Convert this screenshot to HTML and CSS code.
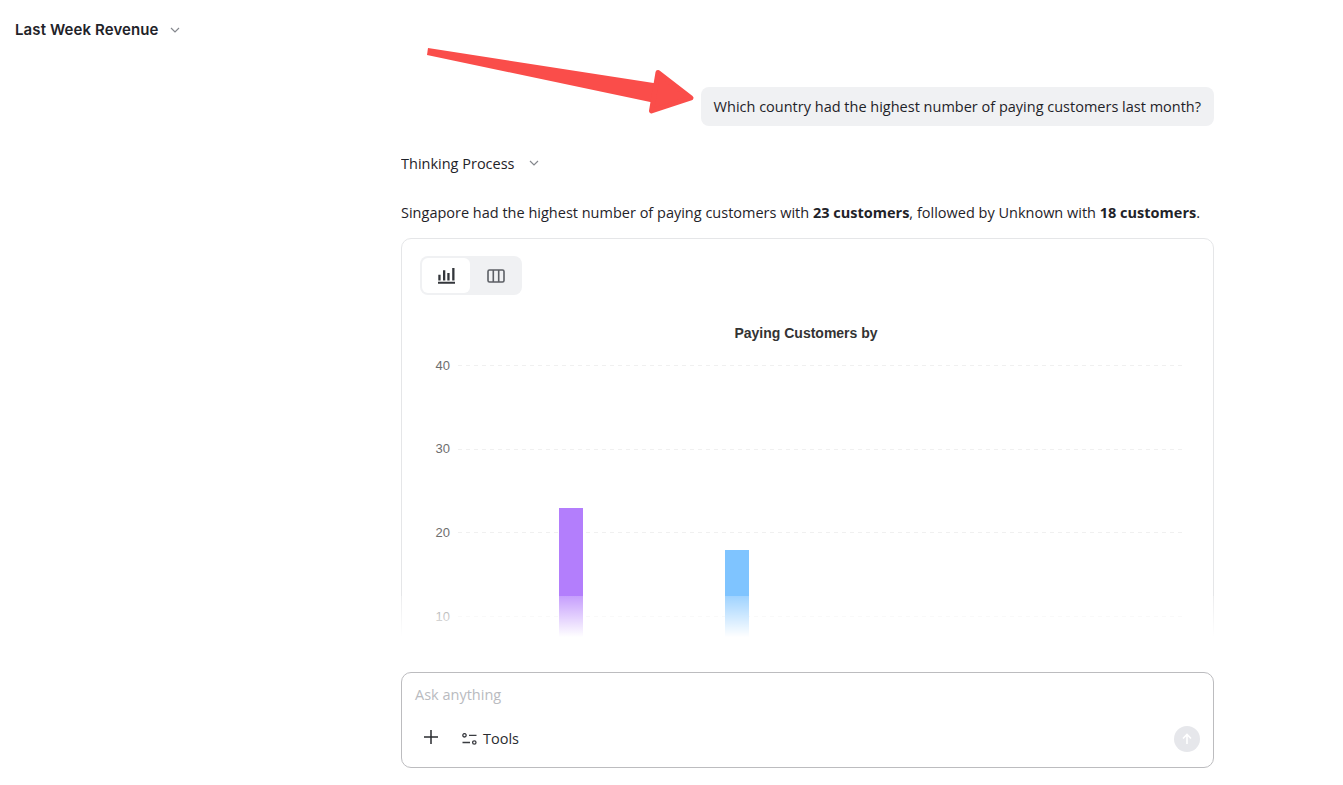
FILE: index.html
```html
<!DOCTYPE html>
<html lang="en">
  <head>
    <meta charset="UTF-8" />
    <title>Last Week Revenue</title>
    <link rel="stylesheet" href="styles.css">
  </head>
  <body>
    <div class="page">
      <aside class="side">
        <div class="side-title">
          <span>Last Week Revenue</span>
          <svg class="chev" viewBox="0 0 10 6"><path d="M1 1l4 4 4-4" /></svg>
        </div>
      </aside>

      <main class="main">
        <div class="thread">
          <div class="column">
            <div class="bubble">Which country had the highest number of paying customers last month?</div>
            <div class="thinking">
              <span>Thinking Process</span>
              <svg class="chev" viewBox="0 0 10 6"><path d="M1 1l4 4 4-4" /></svg>
            </div>
            <p class="answer">
              Singapore had the highest number of paying customers with <strong>23 customers</strong>,
              followed by Unknown with <strong>18 customers</strong>.
            </p>
            <div class="card">
              <div class="toggle">
                <button class="toggle-btn active">
                  <svg viewBox="0 0 17 16" width="17" height="16">
                    <path class="ico-fill" d="M0 13.800h17V15.700H0zM.3 6.700h2.300v5.700H.3zM5 2.300h2.300v10.100H5zM9.300 5h2.300v7.400H9.300zM14.200 0h2.300v12.400h-2.300z" />
                  </svg>
                </button>
                <button class="toggle-btn">
                  <svg viewBox="0 0 18 14" width="18" height="14">
                    <rect class="ico-line" x="1" y="1" width="16" height="12" rx="1.500" />
                    <path class="ico-line" d="M6.300 1v12M11.700 1v12" />
                  </svg>
                </button>
              </div>
              <svg class="chart" width="811" height="400" viewBox="402 310 811 400">
                <text class="chart-title" x="806" y="338" text-anchor="middle">Paying Customers by</text>
                <g class="axis-labels" text-anchor="end">
                  <text x="450" y="369.500">40</text>
                  <text x="450" y="453">30</text>
                  <text x="450" y="537">20</text>
                  <text x="450" y="620.500">10</text>
                </g>
                <g class="grid">
                  <path d="M458 365.500H1183M458 449.500H1183M458 532.500H1183M458 616.500H1183" />
                </g>
                <rect class="bar-a" x="559" y="508" width="24" height="192" />
                <rect class="bar-b" x="725" y="550" width="24" height="150" />
              </svg>
            </div>
          </div>
          <div class="fade"></div>
        </div>

        <div class="composer">
          <div class="placeholder">Ask anything</div>
          <div class="composer-row">
            <svg class="plus" viewBox="0 0 14 14" width="14" height="14"><path d="M7 0v14M0 7h14" /></svg>
            <div class="tools">
              <svg viewBox="0 0 15 12" width="15" height="12">
                <circle class="ico-line" cx="2.500" cy="2.300" r="1.700" />
                <path class="ico-line" d="M7 2.300h7.500M.5 9.500h7.500" />
                <circle class="ico-line" cx="12.300" cy="9.500" r="1.700" />
              </svg>
              <span>Tools</span>
            </div>
            <div class="send">
              <svg viewBox="0 0 12 12" width="12" height="12"><path d="M6 11V1.500M2 5.500l4-4 4 4" /></svg>
            </div>
          </div>
        </div>
      </main>
    </div>

    <!-- annotation arrow sits over the page -->
    <svg class="arrow" width="1343" height="785" viewBox="0 0 1343 785">
      <path class="shaft" d="M428 48L660 84L655 103L427 55z" />
      <path class="head" d="M658 72.500L691 98L651.500 111z" />
    </svg>
  </body>
</html>
```

FILE: styles.css
```css
* {
  box-sizing: border-box;
}
html,
body {
  margin: 0;
  height: 100%;
  overflow: hidden;
  background: #fff;
}
body {
  font-family: "Open Sans", "Noto Sans", sans-serif;
  font-size: 14.5px;
  color: #1f2329;
}
.page {
  display: flex;
  height: 785px;
}
.side {
  width: 272px;
  padding: 20px 15px;
}
.side-title {
  display: flex;
  align-items: center;
  gap: 11px;
  height: 19px;
  font-family: Inter, sans-serif;
  font-size: 15px;
  font-weight: 600;
  letter-spacing: 0.1px;
  color: #1f2329;
}
.chev {
  width: 10px;
  height: 6px;
  fill: none;
  stroke: #85888e;
  stroke-width: 1.2;
}
.main {
  flex: 1;
  display: flex;
  flex-direction: column;
  align-items: center;
  padding-bottom: 17px;
}
.thread {
  position: relative;
  width: 813px;
  height: 637px;
  overflow: hidden;
}
.column {
  padding-top: 87px;
  display: flex;
  flex-direction: column;
}
.bubble {
  align-self: flex-end;
  height: 39px;
  line-height: 39px;
  padding: 0 13px;
  background: #f0f1f3;
  border-radius: 8px;
  white-space: nowrap;
}
.thinking {
  display: flex;
  align-items: center;
  gap: 14px;
  margin-top: 27px;
  height: 20px;
}
.answer {
  margin: 30px 0 0;
  height: 20px;
  line-height: 20px;
  white-space: nowrap;
}
.answer strong {
  font-weight: 700;
}
.card {
  margin-top: 15px;
  height: 480px;
  border: 1px solid #e5e6e8;
  border-radius: 10px;
  padding: 17px 18px;
}
.toggle {
  display: inline-flex;
  gap: 2px;
  padding: 2px;
  height: 39px;
  background: #f0f1f3;
  border-radius: 8px;
}
.toggle-btn {
  display: flex;
  align-items: center;
  justify-content: center;
  width: 48px;
  height: 35px;
  border: 0;
  padding: 0;
  background: transparent;
  border-radius: 6px;
}
.toggle-btn.active {
  background: #fff;
}
.ico-fill {
  fill: #33363b;
}
.ico-line {
  fill: none;
  stroke: #5c5f65;
  stroke-width: 1.6;
}
.tools .ico-line {
  stroke: #3a3c41;
  stroke-width: 1.3;
}
.chart {
  position: absolute;
  left: 1px;
  top: 310px;
}
.chart-title {
  font-family: "Liberation Sans", Arial, sans-serif;
  font-size: 14px;
  font-weight: 700;
  fill: #333;
}
.axis-labels {
  font-family: "Liberation Sans", Arial, sans-serif;
  font-size: 13px;
  fill: #6e6e6e;
}
.grid path {
  fill: none;
  stroke: #f0f0f0;
  stroke-dasharray: 4 4;
}
.bar-a {
  fill: #b37efc;
}
.bar-b {
  fill: #7fc4ff;
}
.fade {
  position: absolute;
  left: 0;
  right: 0;
  bottom: 0;
  height: 41px;
  background: linear-gradient(rgba(255, 255, 255, 0.25), #fff);
}
.composer {
  margin-top: 35px;
  width: 813px;
  height: 96px;
  border: 1px solid #bcbcbf;
  border-radius: 10px;
  padding: 12px 13px 0;
}
.placeholder {
  height: 20px;
  line-height: 20px;
  color: #b9bbc0;
}
.composer-row {
  display: flex;
  align-items: center;
  margin-top: 20px;
  height: 28px;
  padding-left: 9px;
}
.plus {
  fill: none;
  stroke: #2a2c30;
  stroke-width: 1.5;
  margin-top: -4px;
}
.tools {
  display: flex;
  align-items: center;
  gap: 6px;
  margin-left: 17px;
  padding-left: 7px;
  color: #2a2c30;
}
.tools span {
  margin-bottom: 2px;
}
.send {
  display: flex;
  align-items: center;
  justify-content: center;
  margin-left: auto;
  width: 26px;
  height: 26px;
  border-radius: 50%;
  background: #e6e7eb;
}
.send path {
  fill: none;
  stroke: #fff;
  stroke-width: 1.6;
}
.arrow {
  position: absolute;
  left: 0;
  top: 0;
  pointer-events: none;
}
.shaft {
  fill: #fa4d4a;
}
.head {
  fill: #fa4d4a;
  stroke: #fa4d4a;
  stroke-width: 5;
  stroke-linejoin: round;
}
```
